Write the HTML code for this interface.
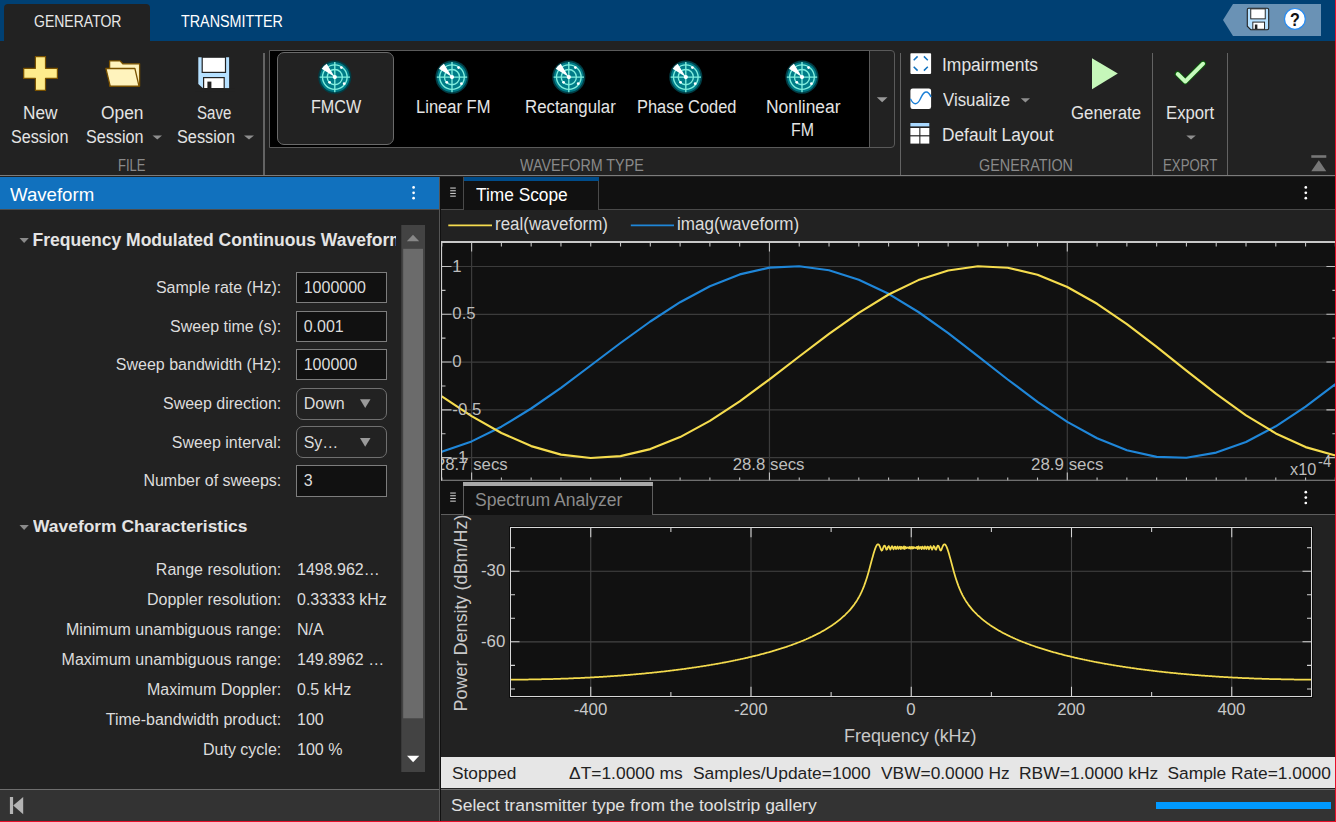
<!DOCTYPE html>
<html lang="en"><head><meta charset="utf-8"><title>Radar Waveform Generator</title>
<style>
html,body{margin:0;padding:0;background:#222;}
#app{position:relative;width:1336px;height:822px;overflow:hidden;background:#222;font-family:"Liberation Sans",sans-serif;}
.b{position:absolute;display:block;}
.t{position:absolute;white-space:nowrap;display:block;}
</style></head>
<body><div id="app">
<div class="b" style="left:0px;top:0px;width:1336px;height:41px;background:#004073;"></div>
<div class="b" style="left:4px;top:4px;width:146px;height:38px;background:#222;border-radius:4px 4px 0 0;"></div>
<span class="t" style="left:33.75px;top:13px;font-size:15.6px;line-height:17px;color:#e8e8e8;transform:scaleX(0.8986);transform-origin:0 0;">GENERATOR</span>
<span class="t" style="left:181.00px;top:13px;font-size:15.6px;line-height:17px;color:#ffffff;transform:scaleX(0.9195);transform-origin:0 0;">TRANSMITTER</span>
<div class="b" style="left:0px;top:41px;width:1336px;height:134px;background:#222;"></div>
<div class="b" style="left:0px;top:174.8px;width:1336px;height:1.25px;background:#7c7c7c;"></div>
<div class="b" style="left:263px;top:53px;width:2px;height:122px;background:#636363;"></div>
<div class="b" style="left:899.9px;top:53px;width:1.35px;height:122px;background:#636363;"></div>
<div class="b" style="left:1151.6px;top:53px;width:1.35px;height:122px;background:#636363;"></div>
<div class="b" style="left:1226.9px;top:53px;width:1.35px;height:122px;background:#636363;"></div>
<div class="b" style="left:269px;top:50px;width:626px;height:97.5px;background:#222;border:1px solid #5a5a5a;border-radius:0 4px 4px 0;box-sizing:border-box;"></div>
<div class="b" style="left:270px;top:51px;width:599px;height:95.5px;background:#000;"></div>
<div class="b" style="left:869px;top:51px;width:1px;height:95.5px;background:#5a5a5a;"></div>
<div class="b" style="left:277px;top:52px;width:116.5px;height:92.5px;background:#222;border:1px solid #6a6a6a;border-radius:7px;box-sizing:border-box;"></div>
<span class="t" style="left:23.00px;top:103px;font-size:18px;line-height:20px;color:#e4e4e4;transform:scaleX(0.9581);transform-origin:0 0;">New</span>
<span class="t" style="left:11.25px;top:127px;font-size:18px;line-height:20px;color:#e4e4e4;transform:scaleX(0.8979);transform-origin:0 0;">Session</span>
<span class="t" style="left:101.00px;top:103px;font-size:18px;line-height:20px;color:#e4e4e4;transform:scaleX(0.9652);transform-origin:0 0;">Open</span>
<span class="t" style="left:85.50px;top:127px;font-size:18px;line-height:20px;color:#e4e4e4;transform:scaleX(0.8979);transform-origin:0 0;">Session</span>
<span class="t" style="left:197.00px;top:103px;font-size:18px;line-height:20px;color:#e4e4e4;transform:scaleX(0.8348);transform-origin:0 0;">Save</span>
<span class="t" style="left:177.00px;top:127px;font-size:18px;line-height:20px;color:#e4e4e4;transform:scaleX(0.9057);transform-origin:0 0;">Session</span>
<span class="t" style="left:310.75px;top:97px;font-size:18px;line-height:20px;color:#e4e4e4;transform:scaleX(0.8977);transform-origin:0 0;">FMCW</span>
<span class="t" style="left:415.75px;top:97px;font-size:18px;line-height:20px;color:#e4e4e4;transform:scaleX(0.9194);transform-origin:0 0;">Linear FM</span>
<span class="t" style="left:524.50px;top:97px;font-size:18px;line-height:20px;color:#e4e4e4;transform:scaleX(0.9350);transform-origin:0 0;">Rectangular</span>
<span class="t" style="left:636.50px;top:97px;font-size:18px;line-height:20px;color:#e4e4e4;transform:scaleX(0.9121);transform-origin:0 0;">Phase Coded</span>
<span class="t" style="left:766.00px;top:97px;font-size:18px;line-height:20px;color:#e4e4e4;transform:scaleX(0.9669);transform-origin:0 0;">Nonlinear</span>
<span class="t" style="left:791.25px;top:120px;font-size:18px;line-height:20px;color:#e4e4e4;transform:scaleX(0.8849);transform-origin:0 0;">FM</span>
<span class="t" style="left:942.25px;top:55px;font-size:18px;line-height:20px;color:#e4e4e4;transform:scaleX(0.9694);transform-origin:0 0;">Impairments</span>
<span class="t" style="left:943.00px;top:90px;font-size:18px;line-height:20px;color:#e4e4e4;transform:scaleX(0.9343);transform-origin:0 0;">Visualize</span>
<span class="t" style="left:942.25px;top:125px;font-size:18px;line-height:20px;color:#e4e4e4;transform:scaleX(0.9606);transform-origin:0 0;">Default Layout</span>
<span class="t" style="left:1070.75px;top:103px;font-size:18px;line-height:20px;color:#e4e4e4;transform:scaleX(0.9327);transform-origin:0 0;">Generate</span>
<span class="t" style="left:1165.75px;top:103px;font-size:18px;line-height:20px;color:#e4e4e4;transform:scaleX(0.9275);transform-origin:0 0;">Export</span>
<span class="t" style="left:118.00px;top:157px;font-size:16px;line-height:17px;color:#8a8a8a;transform:scaleX(0.8139);transform-origin:0 0;">FILE</span>
<span class="t" style="left:520.25px;top:157px;font-size:16px;line-height:17px;color:#8a8a8a;transform:scaleX(0.8942);transform-origin:0 0;">WAVEFORM TYPE</span>
<span class="t" style="left:979.25px;top:157px;font-size:16px;line-height:17px;color:#8a8a8a;transform:scaleX(0.8986);transform-origin:0 0;">GENERATION</span>
<span class="t" style="left:1163.25px;top:157px;font-size:16px;line-height:17px;color:#8a8a8a;transform:scaleX(0.8282);transform-origin:0 0;">EXPORT</span>
<svg class="b" style="left:0;top:0" width="1336" height="180" viewBox="0 0 1336 180"><path d="M1223 20L1233 4H1321V36H1233Z" fill="#6a92b5"/><g transform="translate(1247.3,8.3) scale(0.69)"><path d="M2 0H29a2 2 0 0 1 2 2V29a2 2 0 0 1 -2 2H5L0 26V2a2 2 0 0 1 2 -2Z" fill="#b5e0ff" stroke="#222" stroke-width="1.6"/><rect x="5" y="0.8" width="21" height="14.5" fill="#fff" stroke="#222" stroke-width="1.4"/><rect x="8" y="20" width="17" height="10.4" fill="#fff" stroke="#222" stroke-width="1.4"/><rect x="11" y="23.5" width="3.6" height="6.5" fill="#222"/></g><circle cx="1294.9" cy="18.9" r="10.4" fill="#fff" stroke="#2a8cf0" stroke-width="1.2"/><path d="M35.4 56.6H45.5V68.3H57.4V78.4H45.5V90.4H35.4V78.4H23.7V68.3H35.4Z" fill="#feec8c" stroke="#7a5200" stroke-width="1.2" stroke-linejoin="round"/><path d="M109.6 60.9H120L122.8 63.8H139.6V86.1H109.6Z" fill="#fff3bd" stroke="#7a5200" stroke-width="1.3" stroke-linejoin="round"/><path d="M105.9 68.5H134.9L139 86.1H110.2Z" fill="#fff3bd" stroke="#7a5200" stroke-width="1.3" stroke-linejoin="round"/><path d="M198.3 57.2H229.1V88.2H203L198.3 83.9Z" fill="#b5e0ff"/><rect x="202.2" y="57.2" width="23.3" height="15.2" fill="#fff" stroke="#222" stroke-width="1.2"/><rect x="203.6" y="77.6" width="20.6" height="11" fill="#fff" stroke="#222" stroke-width="1.2"/><rect x="207.4" y="81.6" width="4" height="7" fill="#222"/><rect x="195" y="88.3" width="40" height="3" fill="#222"/><path d="M152.5 135.6H162L157.25 139.6Z" fill="#8f8f8f"/><path d="M244 135.6H254L249.0 139.6Z" fill="#8f8f8f"/><path d="M1186.3 135.6H1195.8L1191.05 139.6Z" fill="#8f8f8f"/><path d="M876.8 97.2H887.5L882.15 102.2Z" fill="#999"/><path d="M1020.8 98.2H1030L1025.4 102.6Z" fill="#8f8f8f"/><g transform="translate(334.8,77.1)"><circle r="16.6" fill="#003e46"/><circle r="14.9" fill="#007c88"/><g fill="none" stroke="#80eede" stroke-width="1.35"><circle r="7.6"/><circle r="12.3"/><path d="M-15.2 0H15.2M0 -15.2V15.2"/></g><path d="M0 0L-13.1 -8.3A15.5 15.5 0 0 1 -8.1 -13.3Z" fill="#fff"/><circle r="2.1" fill="#fff"/><circle cx="6.6" cy="-9.5" r="1.4" fill="#fff"/><circle cx="-5.2" cy="5.2" r="1.4" fill="#fff"/><circle cx="9.4" cy="6.6" r="1.4" fill="#fff"/></g><g transform="translate(452,77.1)"><circle r="16.6" fill="#003e46"/><circle r="14.9" fill="#007c88"/><g fill="none" stroke="#80eede" stroke-width="1.35"><circle r="7.6"/><circle r="12.3"/><path d="M-15.2 0H15.2M0 -15.2V15.2"/></g><path d="M0 0L-13.1 -8.3A15.5 15.5 0 0 1 -8.1 -13.3Z" fill="#fff"/><circle r="2.1" fill="#fff"/><circle cx="6.6" cy="-9.5" r="1.4" fill="#fff"/><circle cx="-5.2" cy="5.2" r="1.4" fill="#fff"/><circle cx="9.4" cy="6.6" r="1.4" fill="#fff"/></g><g transform="translate(568.8,77.1)"><circle r="16.6" fill="#003e46"/><circle r="14.9" fill="#007c88"/><g fill="none" stroke="#80eede" stroke-width="1.35"><circle r="7.6"/><circle r="12.3"/><path d="M-15.2 0H15.2M0 -15.2V15.2"/></g><path d="M0 0L-13.1 -8.3A15.5 15.5 0 0 1 -8.1 -13.3Z" fill="#fff"/><circle r="2.1" fill="#fff"/><circle cx="6.6" cy="-9.5" r="1.4" fill="#fff"/><circle cx="-5.2" cy="5.2" r="1.4" fill="#fff"/><circle cx="9.4" cy="6.6" r="1.4" fill="#fff"/></g><g transform="translate(685.8,77.1)"><circle r="16.6" fill="#003e46"/><circle r="14.9" fill="#007c88"/><g fill="none" stroke="#80eede" stroke-width="1.35"><circle r="7.6"/><circle r="12.3"/><path d="M-15.2 0H15.2M0 -15.2V15.2"/></g><path d="M0 0L-13.1 -8.3A15.5 15.5 0 0 1 -8.1 -13.3Z" fill="#fff"/><circle r="2.1" fill="#fff"/><circle cx="6.6" cy="-9.5" r="1.4" fill="#fff"/><circle cx="-5.2" cy="5.2" r="1.4" fill="#fff"/><circle cx="9.4" cy="6.6" r="1.4" fill="#fff"/></g><g transform="translate(802,77.1)"><circle r="16.6" fill="#003e46"/><circle r="14.9" fill="#007c88"/><g fill="none" stroke="#80eede" stroke-width="1.35"><circle r="7.6"/><circle r="12.3"/><path d="M-15.2 0H15.2M0 -15.2V15.2"/></g><path d="M0 0L-13.1 -8.3A15.5 15.5 0 0 1 -8.1 -13.3Z" fill="#fff"/><circle r="2.1" fill="#fff"/><circle cx="6.6" cy="-9.5" r="1.4" fill="#fff"/><circle cx="-5.2" cy="5.2" r="1.4" fill="#fff"/><circle cx="9.4" cy="6.6" r="1.4" fill="#fff"/></g><rect x="910.4" y="53.3" width="20.7" height="20.6" rx="0.8" fill="#fff"/><path d="M913.7 60.3L917.6 56.4M923.9 56.4L927.8 60.3M913.7 66.7L917.6 70.6M927.8 66.7L923.9 70.6" stroke="#1171be" stroke-width="1.5" fill="none"/><rect x="910.4" y="88.5" width="20.7" height="20.4" rx="2.2" fill="#fff"/><path d="M910.4 98.7C912 102 913.5 103.7 915.3 103.7C918.5 103.7 919.5 100.5 920.8 97.9C922.5 94.5 923.5 92 926.2 92C928.5 92 930 94.5 931.1 97.1" stroke="#1b7fd6" stroke-width="1.4" fill="none"/><rect x="910.4" y="123" width="18.9" height="3.4" fill="#a8d8ff"/><rect x="910.4" y="128" width="8.9" height="7.2" fill="#fff"/><rect x="920.4" y="128" width="8.9" height="7.2" fill="#fff"/><rect x="910.4" y="136.4" width="8.9" height="7.2" fill="#fff"/><rect x="920.4" y="136.4" width="8.9" height="7.2" fill="#fff"/><path d="M1092 58.3V89.2L1117.8 73.6Z" fill="#c6f7ba"/><path d="M1177.7 74L1185.3 81.5L1203.1 63.7" fill="none" stroke="#0a5a0a" stroke-width="5.9" stroke-linecap="round" stroke-linejoin="round"/><path d="M1177.7 74L1185.3 81.5L1203.1 63.7" fill="none" stroke="#c6fbbd" stroke-width="3.9" stroke-linecap="round" stroke-linejoin="round"/><rect x="1311.3" y="155.2" width="15" height="2.6" fill="#777"/><path d="M1311.3 171.2H1326.3L1318.8 160.2Z" fill="#777"/></svg>
<span class="t" style="left:1294.90px;top:10px;font-size:17.5px;line-height:20px;color:#111;font-weight:bold;transform:translateX(-50%) scaleX(0.9200);">?</span>
<div class="b" style="left:0px;top:176.5px;width:439px;height:645.5px;background:#222;"></div>
<div class="b" style="left:0px;top:177px;width:439.2px;height:32.4px;background:#1171be;"></div>
<div class="b" style="left:439px;top:177px;width:1px;height:645px;background:#555;"></div>
<div class="b" style="left:440px;top:177px;width:1px;height:645px;background:#111;"></div>
<div class="b" style="left:0px;top:209.3px;width:439px;height:0.9px;background:#4d4d4d;"></div>
<span class="t" style="left:9.50px;top:184px;font-size:18.4px;line-height:21px;color:#fff;transform:scaleX(1.0132);transform-origin:0 0;">Waveform</span>
<div class="b" style="left:30px;top:228px;width:366.3px;height:26px;overflow:hidden;"><span class="t" style="left:2.50px;top:2px;font-size:17.55px;line-height:20px;color:#e4e4e4;font-weight:bold;">Frequency Modulated Continuous Waveform</span></div>
<span class="t" style="left:32.50px;top:516px;font-size:17.4px;line-height:20px;color:#e4e4e4;font-weight:bold;transform:scaleX(1.0021);transform-origin:0 0;">Waveform Characteristics</span>
<span class="t" style="left:281.25px;top:279px;font-size:16px;line-height:17px;color:#dcdcdc;transform:translateX(-100%);">Sample rate (Hz):</span>
<div class="b" style="left:295.8px;top:272px;width:91.2px;height:31.2px;background:#111;border:1px solid #7d7d7d;box-sizing:border-box;"></div>
<span class="t" style="left:303.70px;top:279px;font-size:16px;line-height:17px;color:#dcdcdc;">1000000</span>
<span class="t" style="left:281.25px;top:318px;font-size:16px;line-height:17px;color:#dcdcdc;transform:translateX(-100%);">Sweep time (s):</span>
<div class="b" style="left:295.8px;top:310.6px;width:91.2px;height:31.2px;background:#111;border:1px solid #7d7d7d;box-sizing:border-box;"></div>
<span class="t" style="left:303.70px;top:318px;font-size:16px;line-height:17px;color:#dcdcdc;">0.001</span>
<span class="t" style="left:281.25px;top:356px;font-size:16px;line-height:17px;color:#dcdcdc;transform:translateX(-100%);">Sweep bandwidth (Hz):</span>
<div class="b" style="left:295.8px;top:349.2px;width:91.2px;height:31.2px;background:#111;border:1px solid #7d7d7d;box-sizing:border-box;"></div>
<span class="t" style="left:303.70px;top:356px;font-size:16px;line-height:17px;color:#dcdcdc;">100000</span>
<span class="t" style="left:281.25px;top:395px;font-size:16px;line-height:17px;color:#dcdcdc;transform:translateX(-100%);">Sweep direction:</span>
<div class="b" style="left:295.8px;top:388.3px;width:91.2px;height:31.4px;background:#222;border:1px solid #707070;border-radius:7px;box-sizing:border-box;"></div>
<span class="t" style="left:303.70px;top:395px;font-size:16px;line-height:17px;color:#dcdcdc;">Down</span>
<span class="t" style="left:281.25px;top:434px;font-size:16px;line-height:17px;color:#dcdcdc;transform:translateX(-100%);">Sweep interval:</span>
<div class="b" style="left:295.8px;top:426.2px;width:91.2px;height:31.4px;background:#222;border:1px solid #707070;border-radius:7px;box-sizing:border-box;"></div>
<span class="t" style="left:303.70px;top:434px;font-size:16px;line-height:17px;color:#dcdcdc;">Sy…</span>
<span class="t" style="left:281.25px;top:472px;font-size:16px;line-height:17px;color:#dcdcdc;transform:translateX(-100%);">Number of sweeps:</span>
<div class="b" style="left:295.8px;top:465.4px;width:91.2px;height:31.2px;background:#111;border:1px solid #7d7d7d;box-sizing:border-box;"></div>
<span class="t" style="left:303.70px;top:472px;font-size:16px;line-height:17px;color:#dcdcdc;">3</span>
<span class="t" style="left:281.25px;top:561px;font-size:16px;line-height:17px;color:#dcdcdc;transform:translateX(-100%);">Range resolution:</span>
<span class="t" style="left:297.00px;top:561px;font-size:16px;line-height:17px;color:#dcdcdc;">1498.962…</span>
<span class="t" style="left:281.25px;top:591px;font-size:16px;line-height:17px;color:#dcdcdc;transform:translateX(-100%);">Doppler resolution:</span>
<span class="t" style="left:297.00px;top:591px;font-size:16px;line-height:17px;color:#dcdcdc;">0.33333 kHz</span>
<span class="t" style="left:281.25px;top:621px;font-size:16px;line-height:17px;color:#dcdcdc;transform:translateX(-100%);">Minimum unambiguous range:</span>
<span class="t" style="left:297.00px;top:621px;font-size:16px;line-height:17px;color:#dcdcdc;">N/A</span>
<span class="t" style="left:281.25px;top:651px;font-size:16px;line-height:17px;color:#dcdcdc;transform:translateX(-100%);">Maximum unambiguous range:</span>
<span class="t" style="left:297.00px;top:651px;font-size:16px;line-height:17px;color:#dcdcdc;">149.8962 …</span>
<span class="t" style="left:281.25px;top:681px;font-size:16px;line-height:17px;color:#dcdcdc;transform:translateX(-100%);">Maximum Doppler:</span>
<span class="t" style="left:297.00px;top:681px;font-size:16px;line-height:17px;color:#dcdcdc;">0.5 kHz</span>
<span class="t" style="left:281.25px;top:711px;font-size:16px;line-height:17px;color:#dcdcdc;transform:translateX(-100%);">Time-bandwidth product:</span>
<span class="t" style="left:297.00px;top:711px;font-size:16px;line-height:17px;color:#dcdcdc;">100</span>
<span class="t" style="left:281.25px;top:741px;font-size:16px;line-height:17px;color:#dcdcdc;transform:translateX(-100%);">Duty cycle:</span>
<span class="t" style="left:297.00px;top:741px;font-size:16px;line-height:17px;color:#dcdcdc;">100 %</span>
<div class="b" style="left:0px;top:789px;width:439px;height:1.1px;background:#6e6e6e;"></div>
<div class="b" style="left:0px;top:790.1px;width:439px;height:32px;background:#333;"></div>
<svg class="b" style="left:0;top:176px" width="441" height="646" viewBox="0 176 441 646"><circle cx="413.6" cy="187.4" r="1.35" fill="#fff"/><circle cx="413.6" cy="192.8" r="1.35" fill="#fff"/><circle cx="413.6" cy="198.2" r="1.35" fill="#fff"/><path d="M19.5 238H28.8L24.1 243Z" fill="#8a8a8a"/><path d="M19.5 525H28.8L24.1 530Z" fill="#8a8a8a"/><rect x="401.3" y="225" width="23.7" height="547" fill="#434343"/><rect x="403.2" y="248.8" width="19.8" height="469.5" fill="#6b6b6b"/><path d="M406.8 241.2H419.2L413 234.8Z" fill="#878787"/><path d="M407 755.8H419.3L413.1 762.2Z" fill="#fff"/><path d="M360 399.3H370.5L365.2 408.1Z" fill="#9a9a9a"/><path d="M360 438H370.5L365.2 446.8Z" fill="#9a9a9a"/><rect x="9.9" y="797" width="3.2" height="17" fill="#b4b4b4"/><path d="M23.2 797V814.2L13.2 805.4Z" fill="#b4b4b4"/></svg>
<div class="b" style="left:441px;top:176.5px;width:895px;height:33px;background:#111;"></div>
<div class="b" style="left:441px;top:209px;width:22.5px;height:1px;background:#4a4a4a;"></div>
<div class="b" style="left:598.5px;top:209px;width:737.5px;height:1px;background:#4a4a4a;"></div>
<div class="b" style="left:463px;top:177px;width:1px;height:33px;background:#4a4a4a;"></div>
<div class="b" style="left:598px;top:177px;width:1px;height:33px;background:#4a4a4a;"></div>
<div class="b" style="left:463.5px;top:177px;width:135px;height:4px;background:#004c8a;"></div>
<span class="t" style="left:476.00px;top:185px;font-size:17.5px;line-height:20px;color:#fff;transform:scaleX(0.9895);transform-origin:0 0;">Time Scope</span>
<div class="b" style="left:441px;top:210px;width:895px;height:32px;background:#222;"></div>
<span class="t" style="left:495.25px;top:214px;font-size:17.6px;line-height:20px;color:#dcdcdc;transform:scaleX(0.9628);transform-origin:0 0;">real(waveform)</span>
<span class="t" style="left:677.00px;top:214px;font-size:17.6px;line-height:20px;color:#dcdcdc;transform:scaleX(0.9690);transform-origin:0 0;">imag(waveform)</span>
<svg class="b" style="left:441px;top:176px" width="895" height="306" viewBox="441 176 895 306"><rect x="441" y="242" width="894.4000000000001" height="238.5" fill="#111"/><rect x="450.2" y="187.5" width="5.6" height="1.1" fill="#c8c8c8"/><rect x="450.2" y="190.2" width="5.6" height="1.1" fill="#c8c8c8"/><rect x="450.2" y="192.9" width="5.6" height="1.1" fill="#c8c8c8"/><rect x="450.2" y="195.6" width="5.6" height="1.1" fill="#c8c8c8"/><circle cx="1305.8" cy="187.4" r="1.35" fill="#fff"/><circle cx="1305.8" cy="192.8" r="1.35" fill="#fff"/><circle cx="1305.8" cy="198.2" r="1.35" fill="#fff"/><path d="M448.3 225.4H492" stroke="#f5dc4e" stroke-width="1.7"/><path d="M630.8 225.4H674" stroke="#1f86d8" stroke-width="1.7"/><path d="M441 266.50H1335.4" stroke="#3c3c3c" stroke-width="1.2"/><path d="M441 314.28H1335.4" stroke="#3c3c3c" stroke-width="1.2"/><path d="M441 362.06H1335.4" stroke="#3c3c3c" stroke-width="1.2"/><path d="M441 409.84H1335.4" stroke="#3c3c3c" stroke-width="1.2"/><path d="M441 457.62H1335.4" stroke="#3c3c3c" stroke-width="1.2"/><path d="M471.60 242V480.5" stroke="#3c3c3c" stroke-width="1.2"/><path d="M769.45 242V480.5" stroke="#3c3c3c" stroke-width="1.2"/><path d="M1067.30 242V480.5" stroke="#3c3c3c" stroke-width="1.2"/><path d="M441.81 242.5v4M441.81 480.5v-3M471.60 242.5v9M471.60 480.5v-8M501.39 242.5v4M501.39 480.5v-3M531.17 242.5v4M531.17 480.5v-3M560.96 242.5v4M560.96 480.5v-3M590.74 242.5v4M590.74 480.5v-3M620.53 242.5v4M620.53 480.5v-3M650.31 242.5v4M650.31 480.5v-3M680.10 242.5v4M680.10 480.5v-3M709.88 242.5v4M709.88 480.5v-3M739.66 242.5v4M739.66 480.5v-3M769.45 242.5v9M769.45 480.5v-8M799.24 242.5v4M799.24 480.5v-3M829.02 242.5v4M829.02 480.5v-3M858.81 242.5v4M858.81 480.5v-3M888.59 242.5v4M888.59 480.5v-3M918.38 242.5v4M918.38 480.5v-3M948.16 242.5v4M948.16 480.5v-3M977.95 242.5v4M977.95 480.5v-3M1007.73 242.5v4M1007.73 480.5v-3M1037.51 242.5v4M1037.51 480.5v-3M1067.30 242.5v9M1067.30 480.5v-8M1097.09 242.5v4M1097.09 480.5v-3M1126.87 242.5v4M1126.87 480.5v-3M1156.65 242.5v4M1156.65 480.5v-3M1186.44 242.5v4M1186.44 480.5v-3M1216.22 242.5v4M1216.22 480.5v-3M1246.01 242.5v4M1246.01 480.5v-3M1275.80 242.5v4M1275.80 480.5v-3M1305.58 242.5v4M1305.58 480.5v-3M1335.37 242.5v4M1335.37 480.5v-3M442 266.50h9.5M1334.9 266.50h-8.5M442 290.39h3.5M1334.9 290.39h-2.5M442 314.28h9.5M1334.9 314.28h-8.5M442 338.17h3.5M1334.9 338.17h-2.5M442 362.06h9.5M1334.9 362.06h-8.5M442 385.95h3.5M1334.9 385.95h-2.5M442 409.84h9.5M1334.9 409.84h-8.5M442 433.73h3.5M1334.9 433.73h-2.5M442 457.62h9.5M1334.9 457.62h-8.5" stroke="#c0c0c0" stroke-width="1.1" fill="none"/><g clip-path="url(#ca)"><path d="M412.0 457.2L441.8 451.7L471.6 441.4L501.4 426.7L531.2 408.5L561.0 387.8L590.7 365.5L620.5 343.0L650.3 321.5L680.1 302.2L709.9 286.2L739.7 274.4L769.5 267.6L799.2 266.2L829.0 270.3L858.8 279.7L888.6 293.8L918.4 312.0L948.2 333.2L977.9 356.1L1007.7 379.5L1037.5 401.8L1067.3 421.9L1097.1 438.3L1126.9 450.3L1156.7 456.9L1186.4 457.7L1216.2 452.6L1246.0 442.0L1275.8 426.3L1305.6 406.6L1335.4 384.1L1365.2 360.1" stroke="#1f86d8" stroke-width="2.15" fill="none" stroke-linejoin="round"/><path d="M412.0 374.8L441.8 396.4L471.6 416.1L501.4 433.0L531.2 446.1L561.0 454.6L590.7 458.0L620.5 456.1L650.3 449.1L680.1 437.1L709.9 420.9L739.7 401.3L769.5 379.4L799.2 356.5L829.0 333.9L858.8 312.8L888.6 294.5L918.4 280.1L948.2 270.5L977.9 266.2L1007.7 267.7L1037.5 274.7L1067.3 287.0L1097.1 303.8L1126.9 324.2L1156.7 346.9L1186.4 370.7L1216.2 393.9L1246.0 415.3L1275.8 433.4L1305.6 447.1L1335.4 455.5L1365.2 458.0" stroke="#f5dc4e" stroke-width="2.15" fill="none" stroke-linejoin="round"/></g><defs><clipPath id="ca"><rect x="442" y="242" width="893.4000000000001" height="238.5"/></clipPath></defs><path d="M441 242.1H1335.4" stroke="#c8c8c8" stroke-width="2"/><path d="M441 480.3H1335.4" stroke="#8c8c8c" stroke-width="1.1"/><path d="M441.55 242V480.5" stroke="#d0d0d0" stroke-width="1.1"/></svg>
<span class="t" style="left:452.30px;top:257px;font-size:16.8px;line-height:19px;color:#bdbdbd;">1</span>
<span class="t" style="left:452.30px;top:304px;font-size:16.8px;line-height:19px;color:#bdbdbd;">0.5</span>
<span class="t" style="left:452.30px;top:352px;font-size:16.8px;line-height:19px;color:#bdbdbd;">0</span>
<span class="t" style="left:452.30px;top:400px;font-size:16.8px;line-height:19px;color:#bdbdbd;">-0.5</span>
<span class="t" style="left:452.30px;top:448px;font-size:16.8px;line-height:19px;color:#bdbdbd;">-1</span>
<div class="b" style="left:441.5px;top:452px;width:80px;height:24px;overflow:hidden;"><span class="t" style="left:66.25px;top:3px;font-size:16.8px;line-height:19px;color:#bdbdbd;transform:translateX(-100%);">28.7 secs</span></div>
<span class="t" style="left:768.60px;top:455px;font-size:16.8px;line-height:19px;color:#bdbdbd;transform:translateX(-50%);">28.8 secs</span>
<span class="t" style="left:1030.75px;top:455px;font-size:16.8px;line-height:19px;color:#bdbdbd;transform:scaleX(1.0082);transform-origin:0 0;">28.9 secs</span>
<span class="t" style="left:1289.50px;top:461px;font-size:16px;line-height:17px;color:#bdbdbd;transform:scaleX(1.0175);transform-origin:0 0;">x10</span>
<span class="t" style="left:1317.50px;top:453px;font-size:16px;line-height:17px;color:#bdbdbd;transform:scaleX(0.9313);transform-origin:0 0;">-4</span>
<div class="b" style="left:441px;top:481px;width:895px;height:33.5px;background:#111;"></div>
<div class="b" style="left:441px;top:514px;width:22.5px;height:1px;background:#5e5e5e;"></div>
<div class="b" style="left:652.5px;top:514px;width:683.5px;height:1px;background:#5e5e5e;"></div>
<div class="b" style="left:463px;top:482px;width:190px;height:33px;background:#111;border-left:1px solid #5e5e5e;border-right:1px solid #5e5e5e;box-sizing:border-box;"></div>
<div class="b" style="left:463px;top:481.5px;width:190px;height:4.6px;background:#a8a8a8;"></div>
<span class="t" style="left:475.20px;top:490px;font-size:17.6px;line-height:20px;color:#8c8c8c;transform:scaleX(0.9979);transform-origin:0 0;">Spectrum Analyzer</span>
<div class="b" style="left:441px;top:515px;width:895px;height:243px;background:#222;"></div>
<svg class="b" style="left:441px;top:481px" width="895" height="277" viewBox="441 481 895 277"><rect x="450.2" y="492.5" width="5.6" height="1.1" fill="#c8c8c8"/><rect x="450.2" y="495.2" width="5.6" height="1.1" fill="#c8c8c8"/><rect x="450.2" y="497.9" width="5.6" height="1.1" fill="#c8c8c8"/><rect x="450.2" y="500.6" width="5.6" height="1.1" fill="#c8c8c8"/><circle cx="1305.8" cy="492.2" r="1.35" fill="#fff"/><circle cx="1305.8" cy="497.6" r="1.35" fill="#fff"/><circle cx="1305.8" cy="503" r="1.35" fill="#fff"/><rect x="510.5" y="527.5" width="801.0" height="169.0" fill="#111"/><path d="M510.5 571.22H1311.5" stroke="#444" stroke-width="1.1"/><path d="M510.5 641.84H1311.5" stroke="#444" stroke-width="1.1"/><path d="M590.75 527.5V696.5" stroke="#444" stroke-width="1.1"/><path d="M751.00 527.5V696.5" stroke="#444" stroke-width="1.1"/><path d="M911.25 527.5V696.5" stroke="#444" stroke-width="1.1"/><path d="M1071.50 527.5V696.5" stroke="#444" stroke-width="1.1"/><path d="M1231.75 527.5V696.5" stroke="#444" stroke-width="1.1"/><path d="M590.75 527.5v9.8M590.75 696.5v-9.8M670.88 527.5v4.5M670.88 696.5v-4.5M751.00 527.5v9.8M751.00 696.5v-9.8M831.12 527.5v4.5M831.12 696.5v-4.5M911.25 527.5v9.8M911.25 696.5v-9.8M991.38 527.5v4.5M991.38 696.5v-4.5M1071.50 527.5v9.8M1071.50 696.5v-9.8M1151.62 527.5v4.5M1151.62 696.5v-4.5M1231.75 527.5v9.8M1231.75 696.5v-9.8M510.5 688.92h4.5M1311.5 688.92h-4.5M510.5 665.38h4.5M1311.5 665.38h-4.5M510.5 641.84h9M1311.5 641.84h-9M510.5 618.30h4.5M1311.5 618.30h-4.5M510.5 594.76h4.5M1311.5 594.76h-4.5M510.5 571.22h9M1311.5 571.22h-9M510.5 547.68h4.5M1311.5 547.68h-4.5" stroke="#d4d4d4" stroke-width="1.05" fill="none"/><path d="M510.6 679.6L511.4 679.6L512.2 679.6L513.0 679.6L513.8 679.5L514.6 679.5L515.4 679.5L516.2 679.5L517.0 679.5L517.8 679.5L518.6 679.5L519.4 679.5L520.2 679.5L521.0 679.5L521.8 679.5L522.6 679.5L523.4 679.5L524.2 679.5L525.0 679.5L525.8 679.5L526.6 679.5L527.5 679.5L528.3 679.5L529.1 679.4L529.9 679.4L530.7 679.4L531.5 679.4L532.3 679.4L533.1 679.4L533.9 679.4L534.7 679.4L535.5 679.4L536.3 679.3L537.1 679.3L537.9 679.3L538.7 679.3L539.5 679.3L540.3 679.3L541.1 679.3L541.9 679.2L542.7 679.2L543.5 679.2L544.3 679.2L545.1 679.2L545.9 679.2L546.7 679.1L547.5 679.1L548.3 679.1L549.1 679.1L549.9 679.1L550.7 679.0L551.5 679.0L552.3 679.0L553.1 679.0L553.9 678.9L554.7 678.9L555.5 678.9L556.3 678.9L557.1 678.9L557.9 678.8L558.7 678.8L559.5 678.8L560.3 678.8L561.1 678.7L561.9 678.7L562.7 678.7L563.5 678.6L564.3 678.6L565.1 678.6L565.9 678.6L566.7 678.5L567.5 678.5L568.3 678.5L569.1 678.4L569.9 678.4L570.7 678.4L571.5 678.3L572.3 678.3L573.1 678.3L573.9 678.2L574.7 678.2L575.5 678.2L576.3 678.1L577.1 678.1L577.9 678.1L578.7 678.0L579.5 678.0L580.3 678.0L581.1 677.9L581.9 677.9L582.7 677.9L583.5 677.8L584.3 677.8L585.1 677.7L585.9 677.7L586.7 677.7L587.5 677.6L588.3 677.6L589.1 677.5L589.9 677.5L590.8 677.4L591.6 677.4L592.4 677.4L593.2 677.3L594.0 677.3L594.8 677.2L595.6 677.2L596.4 677.1L597.2 677.1L598.0 677.0L598.8 677.0L599.6 676.9L600.4 676.9L601.2 676.8L602.0 676.8L602.8 676.8L603.6 676.7L604.4 676.6L605.2 676.6L606.0 676.5L606.8 676.5L607.6 676.4L608.4 676.4L609.2 676.3L610.0 676.3L610.8 676.2L611.6 676.2L612.4 676.1L613.2 676.1L614.0 676.0L614.8 675.9L615.6 675.9L616.4 675.8L617.2 675.8L618.0 675.7L618.8 675.7L619.6 675.6L620.4 675.5L621.2 675.5L622.0 675.4L622.8 675.3L623.6 675.3L624.4 675.2L625.2 675.2L626.0 675.1L626.8 675.0L627.6 675.0L628.4 674.9L629.2 674.8L630.0 674.8L630.8 674.7L631.6 674.6L632.4 674.6L633.2 674.5L634.0 674.4L634.8 674.4L635.6 674.3L636.4 674.2L637.2 674.1L638.0 674.1L638.8 674.0L639.6 673.9L640.4 673.9L641.2 673.8L642.0 673.7L642.8 673.6L643.6 673.5L644.4 673.5L645.2 673.4L646.0 673.3L646.8 673.2L647.6 673.2L648.4 673.1L649.2 673.0L650.0 672.9L650.8 672.8L651.6 672.8L652.4 672.7L653.2 672.6L654.0 672.5L654.9 672.4L655.7 672.3L656.5 672.3L657.3 672.2L658.1 672.1L658.9 672.0L659.7 671.9L660.5 671.8L661.3 671.7L662.1 671.6L662.9 671.6L663.7 671.5L664.5 671.4L665.3 671.3L666.1 671.2L666.9 671.1L667.7 671.0L668.5 670.9L669.3 670.8L670.1 670.7L670.9 670.6L671.7 670.5L672.5 670.4L673.3 670.3L674.1 670.2L674.9 670.1L675.7 670.0L676.5 669.9L677.3 669.8L678.1 669.7L678.9 669.6L679.7 669.5L680.5 669.4L681.3 669.3L682.1 669.2L682.9 669.1L683.7 669.0L684.5 668.9L685.3 668.8L686.1 668.6L686.9 668.5L687.7 668.4L688.5 668.3L689.3 668.2L690.1 668.1L690.9 668.0L691.7 667.9L692.5 667.7L693.3 667.6L694.1 667.5L694.9 667.4L695.7 667.3L696.5 667.2L697.3 667.0L698.1 666.9L698.9 666.8L699.7 666.7L700.5 666.5L701.3 666.4L702.1 666.3L702.9 666.2L703.7 666.0L704.5 665.9L705.3 665.8L706.1 665.7L706.9 665.5L707.7 665.4L708.5 665.3L709.3 665.1L710.1 665.0L710.9 664.9L711.7 664.7L712.5 664.6L713.3 664.5L714.1 664.3L714.9 664.2L715.7 664.0L716.5 663.9L717.3 663.8L718.1 663.6L719.0 663.5L719.8 663.3L720.6 663.2L721.4 663.0L722.2 662.9L723.0 662.7L723.8 662.6L724.6 662.4L725.4 662.3L726.2 662.1L727.0 662.0L727.8 661.8L728.6 661.7L729.4 661.5L730.2 661.3L731.0 661.2L731.8 661.0L732.6 660.9L733.4 660.7L734.2 660.5L735.0 660.4L735.8 660.2L736.6 660.0L737.4 659.9L738.2 659.7L739.0 659.5L739.8 659.4L740.6 659.2L741.4 659.0L742.2 658.8L743.0 658.7L743.8 658.5L744.6 658.3L745.4 658.1L746.2 657.9L747.0 657.8L747.8 657.6L748.6 657.4L749.4 657.2L750.2 657.0L751.0 656.8L751.8 656.6L752.6 656.4L753.4 656.2L754.2 656.1L755.0 655.9L755.8 655.7L756.6 655.5L757.4 655.3L758.2 655.1L759.0 654.9L759.8 654.6L760.6 654.4L761.4 654.2L762.2 654.0L763.0 653.8L763.8 653.6L764.6 653.4L765.4 653.2L766.2 652.9L767.0 652.7L767.8 652.5L768.6 652.3L769.4 652.1L770.2 651.8L771.0 651.6L771.8 651.4L772.6 651.1L773.4 650.9L774.2 650.7L775.0 650.4L775.8 650.2L776.6 649.9L777.4 649.7L778.2 649.4L779.0 649.2L779.8 648.9L780.6 648.7L781.4 648.4L782.2 648.2L783.0 647.9L783.9 647.7L784.7 647.4L785.5 647.1L786.3 646.9L787.1 646.6L787.9 646.3L788.7 646.0L789.5 645.7L790.3 645.5L791.1 645.2L791.9 644.9L792.7 644.6L793.5 644.3L794.3 644.0L795.1 643.7L795.9 643.4L796.7 643.1L797.5 642.8L798.3 642.5L799.1 642.2L799.9 641.9L800.7 641.5L801.5 641.2L802.3 640.9L803.1 640.6L803.9 640.2L804.7 639.9L805.5 639.5L806.3 639.2L807.1 638.8L807.9 638.5L808.7 638.1L809.5 637.8L810.3 637.4L811.1 637.0L811.9 636.7L812.7 636.3L813.5 635.9L814.3 635.5L815.1 635.1L815.9 634.7L816.7 634.3L817.5 633.9L818.3 633.5L819.1 633.1L819.9 632.7L820.7 632.2L821.5 631.8L822.3 631.3L823.1 630.9L823.9 630.4L824.7 630.0L825.5 629.5L826.3 629.0L827.1 628.5L827.9 628.0L828.7 627.5L829.5 627.0L830.3 626.5L831.1 626.0L831.9 625.4L832.7 624.9L833.5 624.3L834.3 623.8L835.1 623.2L835.9 622.6L836.7 622.0L837.5 621.4L838.3 620.8L839.1 620.1L839.9 619.5L840.7 618.8L841.5 618.1L842.3 617.4L843.1 616.7L843.9 616.0L844.7 615.3L845.5 614.5L846.3 613.7L847.1 612.9L848.0 612.0L848.8 611.2L849.6 610.3L850.4 609.4L851.2 608.4L852.0 607.4L852.8 606.4L853.6 605.4L854.4 604.3L855.2 603.1L856.0 601.9L856.8 600.7L857.6 599.4L858.4 598.0L859.2 596.6L860.0 595.1L860.8 593.5L861.6 591.8L862.4 590.0L863.2 588.1L864.0 586.1L864.8 583.9L865.6 581.6L866.4 579.2L867.2 576.7L868.0 574.0L868.8 571.2L869.6 568.3L870.4 565.3L871.2 562.3L872.0 559.3L872.8 556.4L873.6 553.6L874.4 551.0L875.2 548.6L876.0 546.7L876.8 545.2L877.6 544.4L878.4 544.3L879.2 545.1L880.0 546.8L880.8 549.0L881.6 550.6L882.4 550.0L883.2 547.7L884.0 545.8L884.8 545.7L885.6 547.4L886.4 549.6L887.2 549.2L888.0 546.8L888.8 546.0L889.6 547.8L890.4 549.6L891.2 547.7L892.0 546.1L892.8 547.8L893.6 549.3L894.4 546.9L895.2 546.6L896.0 549.1L896.8 547.7L897.6 546.4L898.4 548.9L899.2 547.7L900.0 546.6L900.8 549.1L901.6 546.9L902.4 547.5L903.2 548.7L904.0 546.4L904.8 549.0L905.6 546.8L906.4 548.1L907.2 547.7L908.0 547.3L908.8 548.3L909.6 546.9L910.4 548.6L911.2 546.8L912.1 548.6L912.9 546.9L913.7 548.3L914.5 547.3L915.3 547.7L916.1 548.1L916.9 546.8L917.7 549.0L918.5 546.4L919.3 548.7L920.1 547.5L920.9 546.9L921.7 549.1L922.5 546.6L923.3 547.7L924.1 548.9L924.9 546.4L925.7 547.7L926.5 549.1L927.3 546.6L928.1 546.9L928.9 549.3L929.7 547.8L930.5 546.1L931.3 547.7L932.1 549.6L932.9 547.8L933.7 546.0L934.5 546.8L935.3 549.2L936.1 549.6L936.9 547.4L937.7 545.7L938.5 545.8L939.3 547.7L940.1 550.0L940.9 550.6L941.7 549.0L942.5 546.8L943.3 545.1L944.1 544.3L944.9 544.4L945.7 545.2L946.5 546.7L947.3 548.6L948.1 551.0L948.9 553.6L949.7 556.4L950.5 559.3L951.3 562.3L952.1 565.3L952.9 568.3L953.7 571.2L954.5 574.0L955.3 576.7L956.1 579.2L956.9 581.6L957.7 583.9L958.5 586.1L959.3 588.1L960.1 590.0L960.9 591.8L961.7 593.5L962.5 595.1L963.3 596.6L964.1 598.0L964.9 599.4L965.7 600.7L966.5 601.9L967.3 603.1L968.1 604.3L968.9 605.4L969.7 606.4L970.5 607.4L971.3 608.4L972.1 609.4L972.9 610.3L973.7 611.2L974.5 612.0L975.4 612.9L976.2 613.7L977.0 614.5L977.8 615.3L978.6 616.0L979.4 616.7L980.2 617.4L981.0 618.1L981.8 618.8L982.6 619.5L983.4 620.1L984.2 620.8L985.0 621.4L985.8 622.0L986.6 622.6L987.4 623.2L988.2 623.8L989.0 624.3L989.8 624.9L990.6 625.4L991.4 626.0L992.2 626.5L993.0 627.0L993.8 627.5L994.6 628.0L995.4 628.5L996.2 629.0L997.0 629.5L997.8 630.0L998.6 630.4L999.4 630.9L1000.2 631.3L1001.0 631.8L1001.8 632.2L1002.6 632.7L1003.4 633.1L1004.2 633.5L1005.0 633.9L1005.8 634.3L1006.6 634.7L1007.4 635.1L1008.2 635.5L1009.0 635.9L1009.8 636.3L1010.6 636.7L1011.4 637.0L1012.2 637.4L1013.0 637.8L1013.8 638.1L1014.6 638.5L1015.4 638.8L1016.2 639.2L1017.0 639.5L1017.8 639.9L1018.6 640.2L1019.4 640.6L1020.2 640.9L1021.0 641.2L1021.8 641.5L1022.6 641.9L1023.4 642.2L1024.2 642.5L1025.0 642.8L1025.8 643.1L1026.6 643.4L1027.4 643.7L1028.2 644.0L1029.0 644.3L1029.8 644.6L1030.6 644.9L1031.4 645.2L1032.2 645.5L1033.0 645.7L1033.8 646.0L1034.6 646.3L1035.4 646.6L1036.2 646.9L1037.0 647.1L1037.8 647.4L1038.6 647.7L1039.5 647.9L1040.3 648.2L1041.1 648.4L1041.9 648.7L1042.7 648.9L1043.5 649.2L1044.3 649.4L1045.1 649.7L1045.9 649.9L1046.7 650.2L1047.5 650.4L1048.3 650.7L1049.1 650.9L1049.9 651.1L1050.7 651.4L1051.5 651.6L1052.3 651.8L1053.1 652.1L1053.9 652.3L1054.7 652.5L1055.5 652.7L1056.3 652.9L1057.1 653.2L1057.9 653.4L1058.7 653.6L1059.5 653.8L1060.3 654.0L1061.1 654.2L1061.9 654.4L1062.7 654.6L1063.5 654.9L1064.3 655.1L1065.1 655.3L1065.9 655.5L1066.7 655.7L1067.5 655.9L1068.3 656.1L1069.1 656.2L1069.9 656.4L1070.7 656.6L1071.5 656.8L1072.3 657.0L1073.1 657.2L1073.9 657.4L1074.7 657.6L1075.5 657.8L1076.3 657.9L1077.1 658.1L1077.9 658.3L1078.7 658.5L1079.5 658.7L1080.3 658.8L1081.1 659.0L1081.9 659.2L1082.7 659.4L1083.5 659.5L1084.3 659.7L1085.1 659.9L1085.9 660.0L1086.7 660.2L1087.5 660.4L1088.3 660.5L1089.1 660.7L1089.9 660.9L1090.7 661.0L1091.5 661.2L1092.3 661.3L1093.1 661.5L1093.9 661.7L1094.7 661.8L1095.5 662.0L1096.3 662.1L1097.1 662.3L1097.9 662.4L1098.7 662.6L1099.5 662.7L1100.3 662.9L1101.1 663.0L1101.9 663.2L1102.7 663.3L1103.5 663.5L1104.4 663.6L1105.2 663.8L1106.0 663.9L1106.8 664.0L1107.6 664.2L1108.4 664.3L1109.2 664.5L1110.0 664.6L1110.8 664.7L1111.6 664.9L1112.4 665.0L1113.2 665.1L1114.0 665.3L1114.8 665.4L1115.6 665.5L1116.4 665.7L1117.2 665.8L1118.0 665.9L1118.8 666.0L1119.6 666.2L1120.4 666.3L1121.2 666.4L1122.0 666.5L1122.8 666.7L1123.6 666.8L1124.4 666.9L1125.2 667.0L1126.0 667.2L1126.8 667.3L1127.6 667.4L1128.4 667.5L1129.2 667.6L1130.0 667.7L1130.8 667.9L1131.6 668.0L1132.4 668.1L1133.2 668.2L1134.0 668.3L1134.8 668.4L1135.6 668.5L1136.4 668.6L1137.2 668.8L1138.0 668.9L1138.8 669.0L1139.6 669.1L1140.4 669.2L1141.2 669.3L1142.0 669.4L1142.8 669.5L1143.6 669.6L1144.4 669.7L1145.2 669.8L1146.0 669.9L1146.8 670.0L1147.6 670.1L1148.4 670.2L1149.2 670.3L1150.0 670.4L1150.8 670.5L1151.6 670.6L1152.4 670.7L1153.2 670.8L1154.0 670.9L1154.8 671.0L1155.6 671.1L1156.4 671.2L1157.2 671.3L1158.0 671.4L1158.8 671.5L1159.6 671.6L1160.4 671.6L1161.2 671.7L1162.0 671.8L1162.8 671.9L1163.6 672.0L1164.4 672.1L1165.2 672.2L1166.0 672.3L1166.8 672.3L1167.7 672.4L1168.5 672.5L1169.3 672.6L1170.1 672.7L1170.9 672.8L1171.7 672.8L1172.5 672.9L1173.3 673.0L1174.1 673.1L1174.9 673.2L1175.7 673.2L1176.5 673.3L1177.3 673.4L1178.1 673.5L1178.9 673.5L1179.7 673.6L1180.5 673.7L1181.3 673.8L1182.1 673.9L1182.9 673.9L1183.7 674.0L1184.5 674.1L1185.3 674.1L1186.1 674.2L1186.9 674.3L1187.7 674.4L1188.5 674.4L1189.3 674.5L1190.1 674.6L1190.9 674.6L1191.7 674.7L1192.5 674.8L1193.3 674.8L1194.1 674.9L1194.9 675.0L1195.7 675.0L1196.5 675.1L1197.3 675.2L1198.1 675.2L1198.9 675.3L1199.7 675.3L1200.5 675.4L1201.3 675.5L1202.1 675.5L1202.9 675.6L1203.7 675.7L1204.5 675.7L1205.3 675.8L1206.1 675.8L1206.9 675.9L1207.7 675.9L1208.5 676.0L1209.3 676.1L1210.1 676.1L1210.9 676.2L1211.7 676.2L1212.5 676.3L1213.3 676.3L1214.1 676.4L1214.9 676.4L1215.7 676.5L1216.5 676.5L1217.3 676.6L1218.1 676.6L1218.9 676.7L1219.7 676.8L1220.5 676.8L1221.3 676.8L1222.1 676.9L1222.9 676.9L1223.7 677.0L1224.5 677.0L1225.3 677.1L1226.1 677.1L1226.9 677.2L1227.7 677.2L1228.5 677.3L1229.3 677.3L1230.1 677.4L1230.9 677.4L1231.8 677.4L1232.6 677.5L1233.4 677.5L1234.2 677.6L1235.0 677.6L1235.8 677.7L1236.6 677.7L1237.4 677.7L1238.2 677.8L1239.0 677.8L1239.8 677.9L1240.6 677.9L1241.4 677.9L1242.2 678.0L1243.0 678.0L1243.8 678.0L1244.6 678.1L1245.4 678.1L1246.2 678.1L1247.0 678.2L1247.8 678.2L1248.6 678.2L1249.4 678.3L1250.2 678.3L1251.0 678.3L1251.8 678.4L1252.6 678.4L1253.4 678.4L1254.2 678.5L1255.0 678.5L1255.8 678.5L1256.6 678.6L1257.4 678.6L1258.2 678.6L1259.0 678.6L1259.8 678.7L1260.6 678.7L1261.4 678.7L1262.2 678.8L1263.0 678.8L1263.8 678.8L1264.6 678.8L1265.4 678.9L1266.2 678.9L1267.0 678.9L1267.8 678.9L1268.6 678.9L1269.4 679.0L1270.2 679.0L1271.0 679.0L1271.8 679.0L1272.6 679.1L1273.4 679.1L1274.2 679.1L1275.0 679.1L1275.8 679.1L1276.6 679.2L1277.4 679.2L1278.2 679.2L1279.0 679.2L1279.8 679.2L1280.6 679.2L1281.4 679.3L1282.2 679.3L1283.0 679.3L1283.8 679.3L1284.6 679.3L1285.4 679.3L1286.2 679.3L1287.0 679.4L1287.8 679.4L1288.6 679.4L1289.4 679.4L1290.2 679.4L1291.0 679.4L1291.8 679.4L1292.6 679.4L1293.4 679.4L1294.2 679.5L1295.0 679.5L1295.8 679.5L1296.7 679.5L1297.5 679.5L1298.3 679.5L1299.1 679.5L1299.9 679.5L1300.7 679.5L1301.5 679.5L1302.3 679.5L1303.1 679.5L1303.9 679.5L1304.7 679.5L1305.5 679.5L1306.3 679.5L1307.1 679.5L1307.9 679.5L1308.7 679.5L1309.5 679.6L1310.3 679.6L1311.1 679.6L1311.9 679.6" stroke="#f5dc4e" stroke-width="1.75" fill="none" stroke-linejoin="round"/><rect x="509.5" y="526.5" width="803.0" height="171.0" fill="none" stroke="#0e0e0e" stroke-width="1"/><rect x="510.5" y="527.5" width="801.0" height="169.0" fill="none" stroke="#d8d8d8" stroke-width="1"/></svg>
<span class="t" style="left:505.25px;top:561px;font-size:16.8px;line-height:19px;color:#c8c8c8;transform:translateX(-100%);">-30</span>
<span class="t" style="left:505.25px;top:632px;font-size:16.8px;line-height:19px;color:#c8c8c8;transform:translateX(-100%);">-60</span>
<span class="t" style="left:590.45px;top:700px;font-size:16.8px;line-height:19px;color:#c8c8c8;transform:translateX(-50%);">-400</span>
<span class="t" style="left:750.70px;top:700px;font-size:16.8px;line-height:19px;color:#c8c8c8;transform:translateX(-50%);">-200</span>
<span class="t" style="left:910.95px;top:700px;font-size:16.8px;line-height:19px;color:#c8c8c8;transform:translateX(-50%);">0</span>
<span class="t" style="left:1071.20px;top:700px;font-size:16.8px;line-height:19px;color:#c8c8c8;transform:translateX(-50%);">200</span>
<span class="t" style="left:1231.45px;top:700px;font-size:16.8px;line-height:19px;color:#c8c8c8;transform:translateX(-50%);">400</span>
<span class="t" style="left:844.25px;top:726px;font-size:18px;line-height:20px;color:#c8c8c8;transform:scaleX(0.9960);transform-origin:0 0;">Frequency (kHz)</span>
<span class="t" style="left:467.2px;top:612.6px;font-size:18px;line-height:18px;color:#c8c8c8;transform:translate(-50%,-50%) rotate(-90deg) translateY(-6px);">Power Density (dBm/Hz)</span>
<div class="b" style="left:441px;top:757.4px;width:895px;height:30.6px;background:#e6e6e6;"></div>
<span class="t" style="left:451.50px;top:763px;font-size:17.33px;line-height:20px;color:#222;transform:scaleX(0.9990);transform-origin:0 0;">Stopped</span>
<span class="t" style="left:569.00px;top:763px;font-size:17.33px;line-height:20px;color:#222;transform:scaleX(1.0048);transform-origin:0 0;">ΔT=1.0000 ms</span>
<span class="t" style="left:692.75px;top:763px;font-size:17.33px;line-height:20px;color:#222;transform:scaleX(1.0054);transform-origin:0 0;">Samples/Update=1000</span>
<span class="t" style="left:880.50px;top:763px;font-size:17.33px;line-height:20px;color:#222;transform:scaleX(1.0012);transform-origin:0 0;">VBW=0.0000 Hz</span>
<span class="t" style="left:1019.00px;top:763px;font-size:17.33px;line-height:20px;color:#222;transform:scaleX(1.0075);transform-origin:0 0;">RBW=1.0000 kHz</span>
<span class="t" style="left:1167.50px;top:763px;font-size:17.33px;line-height:20px;color:#222;">Sample Rate=1.0000</span>
<div class="b" style="left:441px;top:788px;width:895px;height:1px;background:#222;"></div>
<div class="b" style="left:441px;top:789px;width:895px;height:1.1px;background:#6e6e6e;"></div>
<div class="b" style="left:441px;top:790.1px;width:895px;height:32px;background:#333;"></div>
<span class="t" style="left:451.00px;top:795px;font-size:17.33px;line-height:20px;color:#e0e0e0;transform:scaleX(1.0099);transform-origin:0 0;">Select transmitter type from the toolstrip gallery</span>
<div class="b" style="left:1155.8px;top:802px;width:175.5px;height:7px;background:#0099ff;"></div>
<div class="b" style="left:1334.8px;top:0px;width:1.2px;height:822px;background:#e8102a;"></div>
<div class="b" style="left:0px;top:820.7px;width:1336px;height:1.3px;background:#e8102a;"></div>
</div></body></html>
